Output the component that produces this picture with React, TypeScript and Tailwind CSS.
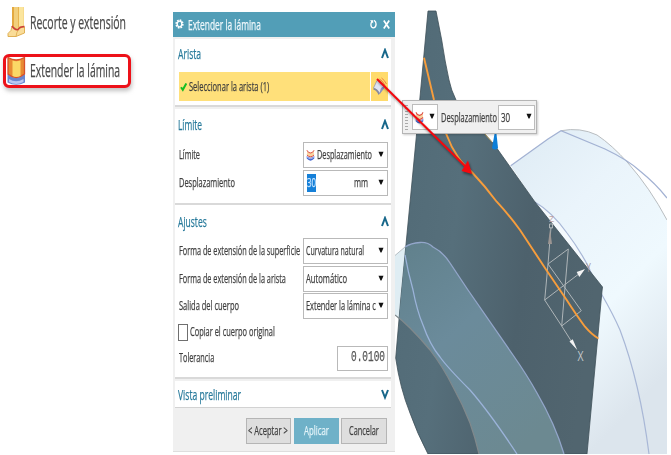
import { useLayoutEffect, useRef, useState } from "react";
import type { ReactNode } from "react";

/** Text on a single line, condensed or stretched to a given width. */
function Fit({ w, className = "", children }: { w: number; className?: string; children: string }) {
  const ref = useRef<HTMLSpanElement>(null);
  const [scale, setScale] = useState(1);
  useLayoutEffect(() => {
    const natural = ref.current?.offsetWidth ?? 0;
    if (natural) setScale(w / natural);
  }, [w, children]);
  return (
    <span className="block shrink-0 whitespace-nowrap" style={{ width: w }}>
      <span
        ref={ref}
        className={`block w-max origin-left ${className}`}
        style={{ transform: `scaleX(${scale})` }}
      >
        {children}
      </span>
    </span>
  );
}

const label = "text-[12.5px] leading-[18px] text-[#3f3f3f]";

function Triangle() {
  return (
    <svg className="relative -top-px shrink-0" width="6" height="6" viewBox="0 0 6 6">
      <path d="M0.5 0.8H5.5L3.5 5.4H2.5Z" fill="#111" />
    </svg>
  );
}

function Chevron({ down = false }: { down?: boolean }) {
  return (
    <svg width="8" height="11" viewBox="0 0 8 11" className="relative -top-px shrink-0">
      <path d={down ? "M1 1L4 8.5L7 1" : "M1 10L4 2L7 10"} fill="none" stroke="#17678a" strokeWidth="2" />
    </svg>
  );
}

function SheetIcon({ className }: { className: string }) {
  return (
    <svg className={className} viewBox="0 0 10 12" preserveAspectRatio="none">
      <path d="M.8 7Q5 10.500 9.200 7V9.500Q5 13.800 .8 9.500Z" fill="#4566d0" />
      <path d="M1.200 1.500L3 3.600H7L8.800 1.500V6.200Q5 9.600 1.200 6.200Z" fill="#f9d3a0" />
      <path d="M1 1.200Q2.500 4 5 4Q7.500 4 9 1.200M1 6Q5 9.600 9 6" fill="none" stroke="#dc4a40" strokeWidth="1" />
      <path d="M1.200 8Q5 11.200 8.800 8" fill="none" stroke="#e6ebfb" strokeWidth=".7" />
    </svg>
  );
}

function Header({ title, w, down = false }: { title: string; w: number; down?: boolean }) {
  return (
    <div className="flex h-[28px] items-center justify-between pr-[2px] pl-[3px]">
      <Fit w={w} className="relative -top-px text-[15px] leading-[20px] text-[#26799a]">{title}</Fit>
      <Chevron down={down} />
    </div>
  );
}

function Select({ children }: { children: ReactNode }) {
  return (
    <div className="flex h-[26px] w-[85px] shrink-0 items-center justify-between border border-[#b9b9b9] bg-white pr-[3px] pl-[2px]">
      <div className="flex items-center">{children}</div>
      <Triangle />
    </div>
  );
}

function Row({ text, w, children }: { text: string; w: number; children: ReactNode }) {
  return (
    <div className="flex h-[26px] items-center justify-between pr-[3px] pl-[4px]">
      <Fit w={w} className={label}>{text}</Fit>
      {children}
    </div>
  );
}

function Commands() {
  return (
    <aside className="w-[173px] shrink-0 pt-[6px]">
      <div className="flex h-[32px] items-center gap-[4px] pl-[7px]">
        <svg width="19" height="32" viewBox="7 6 19 32">
          <path d="M12 7H24V28L13 30L12 26Z" fill="#f2cf7c" />
          <path d="M13 7V26" stroke="#e2a53a" strokeWidth="1.8" fill="none" />
          <path d="M18.500 7V27" stroke="#e8b450" strokeWidth="1" fill="none" />
          <path d="M19 7H23.500V26H19Z" fill="#fbe59d" />
          <path d="M12 26Q12 31 8 33.500V36.500H16L24.500 33V27Q20 27 18 30Z" fill="#f9dc98" stroke="#dda947" strokeWidth=".9" />
          <path d="M16 36.500Q16.500 32 18.500 29.500" stroke="#dda947" strokeWidth=".8" fill="none" />
          <path d="M12 26Q15 30.500 18 29.500Q20 26.500 24.500 26.500" fill="none" stroke="#cc4038" strokeWidth="1.5" />
        </svg>
        <Fit w={96} className="text-[18px] leading-[24px] text-[#4a4a4a]">Recorte y extensión</Fit>
      </div>
      <div className="mt-[16px] ml-[3px] flex h-[34px] w-[128px] items-center rounded-[6px] border-[3px] border-[#ed1119] bg-white shadow-[1px_3px_4px_#9999]">
        <svg width="19" height="28" viewBox="7 58 19 28" className="ml-[1px]">
          <path d="M7.500 75Q16 82 25 75V83.500Q16 88 7.500 83.500Z" fill="#6a86cf" />
          <path d="M9 80Q16 84.500 23.500 80V83Q16 87 9 83Z" fill="#b9c7f0" />
          <path d="M8 58.500Q16 63.500 24.500 58.500V75Q16 82 8 75Z" fill="#e88a33" stroke="#d8502c" strokeWidth="1.3" />
          <path d="M12.500 61.500Q16 63 20.500 61.500V77Q16 79 12.500 77Z" fill="#fbd866" />
        </svg>
        <Fit w={90} className="relative -top-px ml-[4px] text-[18px] leading-[24px] text-[#4a4a4a]">Extender la lámina</Fit>
      </div>
    </aside>
  );
}

function Dialog() {
  return (
    <section className="mt-[12px] flex h-[440px] w-[222px] shrink-0 flex-col border-b border-[#dedede] bg-[#f0f0f0]">
      <div className="flex h-[24.5px] shrink-0 items-center bg-[#529eb7] pl-[2px]">
        <svg width="9" height="10" viewBox="0 0 9 10">
          <ellipse cx="4.5" cy="5" rx="3.3" ry="3.9" fill="none" stroke="#fff" strokeWidth="1.6" strokeDasharray="1.7 1.1" />
          <ellipse cx="4.5" cy="5" rx="2.3" ry="2.8" fill="none" stroke="#fff" strokeWidth="1.3" />
        </svg>
        <Fit w={73} className="relative top-px ml-[4px] text-[14.5px] leading-[20px] text-[#f0f8fb]">Extender la lámina</Fit>
        <svg className="ml-auto" width="7" height="10" viewBox="0 0 7 10">
          <path d="M4 1.300Q6.500 3 6 6Q5.400 8.800 3.400 8.800Q1.200 8.800 .9 6Q.8 4 2 2.200" fill="none" stroke="#fff" strokeWidth="1.300" />
          <path d="M0 1.200H3.200V4.600Z" fill="#fff" />
        </svg>
        <svg className="mr-[5px] ml-[6px]" width="7" height="9" viewBox="0 0 7 9">
          <path d="M.8 .5L6.2 8.5M6.2 .5L.8 8.5" stroke="#fff" strokeWidth="1.7" />
        </svg>
      </div>

      <div className="mt-[2.5px] flex h-[412px] w-[216px] flex-col self-start ml-[2px]">
        <div className="h-[68px] shrink-0 border-b-2 border-[#d9d9d9] bg-white pt-px">
          <Header title="Arista" w={23} />
          <div className="mt-[4px] mr-[3px] ml-[4px] flex h-[29px] gap-px">
            <div className="flex flex-1 items-center bg-[#ffe07a]">
              <svg className="ml-[1px] mr-[2px]" width="7" height="10" viewBox="0 0 7 10">
                <path d="M1 5.2L2.8 7.8L6.3 1.4" fill="none" stroke="#16bd23" strokeWidth="2" />
              </svg>
              <Fit w={80} className={label}>Seleccionar la arista (1)</Fit>
            </div>
            <div className="flex w-[17px] items-center justify-center bg-[#ffdb6c]">
              <svg width="15" height="20" viewBox="0 0 15 20">
                <path d="M5 3.500Q9 4 12 9L7.500 16.500Q6 12 1.500 11Z" fill="#dfe3f3" stroke="#8d91a4" strokeWidth=".7" />
                <path d="M1.500 11Q6 12 7.500 16.500L6.500 18Q5 13.500 1.500 12.800Z" fill="#8588a1" />
                <path d="M9 11L12 9V11.500L7.500 17.500V16Z" fill="#8f93bd" />
                <path d="M7.500 2Q11 4 13 8.500M9.500 1Q12.500 3 14.500 7" stroke="#ee753a" strokeWidth=".9" fill="none" />
              </svg>
            </div>
          </div>
        </div>

        <div className="mt-[2px] h-[96px] shrink-0 border-b-2 border-[#d9d9d9] bg-white pt-[2px]">
          <Header title="Límite" w={24} />
          <div className="mt-[3px] flex flex-col gap-[2px]">
            <Row text="Límite" w={21}>
              <Select>
                <SheetIcon className="mr-[2px] h-[12px] w-[9px]" />
                <Fit w={55} className={label}>Desplazamiento</Fit>
              </Select>
            </Row>
            <Row text="Desplazamiento" w={56}>
              <Select>
                <span className="ml-px flex h-[18px] w-[9px] items-center bg-[#1680d8]">
                  <Fit w={9} className="text-[12.5px] leading-[18px] text-[#c7e4ff]">30</Fit>
                </span>
                <span className="ml-[38px]">
                  <Fit w={14} className={label}>mm</Fit>
                </span>
              </Select>
            </Row>
          </div>
        </div>

        <div className="h-[174px] shrink-0 border-b-2 border-[#d9d9d9] bg-white pt-[3px]">
          <Header title="Ajustes" w={29} />
          <div className="mt-[2px] flex flex-col gap-[1.7px]">
            <Row text="Forma de extensión de la superficie" w={121}>
              <Select><Fit w={58} className={label}>Curvatura natural</Fit></Select>
            </Row>
            <Row text="Forma de extensión de la arista" w={107}>
              <Select><Fit w={41} className={label}>Automático</Fit></Select>
            </Row>
            <Row text="Salida del cuerpo" w={60}>
              <Select><Fit w={70} className={label}>Extender la lámina c</Fit></Select>
            </Row>
          </div>
          <div className="mt-[3px] flex h-[20px] items-center pl-[3px]">
            <span className="mr-[2px] h-[17px] w-[10px] border border-[#6f6f6f] bg-white" />
            <Fit w={85} className={label}>Copiar el cuerpo original</Fit>
          </div>
          <div className="mt-[3px]">
            <Row text="Tolerancia" w={35}>
              <div className="flex h-[25px] w-[51px] items-center justify-end border border-[#b9b9b9] bg-white pr-[2px]">
                <Fit w={34} className="font-['Liberation_Mono'] text-[15px] leading-[18px] text-[#555]">0.0100</Fit>
              </div>
            </Row>
          </div>
        </div>

        <div className="mt-[2px] h-[27px] shrink-0 border-b border-[#d2d2d2] bg-white">
          <Header title="Vista preliminar" w={63} down />
        </div>

        <div className="mt-[10px] flex justify-end gap-[2.5px] pr-[4px]">
          <div className="flex h-[26px] w-[45.5px] items-center justify-center border border-[#b5b5b5] bg-[#dedede]">
            <Fit w={40} className={label}>{"< Aceptar >"}</Fit>
          </div>
          <div className="flex h-[26px] w-[45px] items-center justify-center bg-[#6fb1c8]">
            <Fit w={25} className="text-[12.5px] leading-[18px] text-[#e3f3f8]">Aplicar</Fit>
          </div>
          <div className="flex h-[26px] w-[46px] items-center justify-center border border-[#b5b5b5] bg-[#dedede]">
            <Fit w={30} className={label}>Cancelar</Fit>
          </div>
        </div>
      </div>
    </section>
  );
}

const plate =
  "M428 11H436L441.7 40Q445 62 449 80Q451 90 456 100Q466 119 484 133L492 142L496.7 148L535 202L602.5 287L602 291L587 454H428Q417 433 410 413Q400 388 395.7 358L400.7 300L416 140Z";
const tube =
  "M395 255.5L405 247Q411 243 420 242.5Q428 242 433 247Q443 252 450 263L468 290L513 355Q527 375 537 393Q555 424 564 454H479Q475 437 470 423Q463 405 453 387Q443 367 430 350Q420 338 410 328Q402 320 395 315Z";

function Scene() {
  return (
    <svg className="shrink-0" width="272" height="454" viewBox="395 0 272 454">
      <defs>
        <linearGradient id="plateFill" gradientUnits="userSpaceOnUse" x1="395" y1="200" x2="605" y2="230">
          <stop offset="0" stopColor="#526b77" />
          <stop offset="0.3" stopColor="#566f7b" />
          <stop offset="0.65" stopColor="#4d616c" />
          <stop offset="1" stopColor="#51656f" />
        </linearGradient>
        <linearGradient id="bodyFill" x1="0" y1="0" x2="0.5" y2="1">
          <stop offset="0" stopColor="#deebf4" />
          <stop offset="0.35" stopColor="#eaf4fb" />
          <stop offset="0.68" stopColor="#eff9fe" />
          <stop offset="1" stopColor="#dce5ed" />
        </linearGradient>
        <linearGradient id="tubeFill" x1="0" y1="0" x2="0.7" y2="1">
          <stop offset="0" stopColor="#60808b" />
          <stop offset="0.45" stopColor="#6b8b9b" />
          <stop offset="1" stopColor="#6c8991" />
        </linearGradient>
        <clipPath id="plateClip">
          <path d={plate} />
        </clipPath>
      </defs>

      <path d="M510.7 165.7L548 139L561 130.7Q580 127 597 135Q612 145 628 163Q650 188 667 220V454H587L602 287L535 202Z" fill="url(#bodyFill)" />
      <path d="M535 202Q552 212 567 233L589 268L584 265Z" fill="#f4f9fd" />
      <path d="M561 130.7Q580 127 597 135Q612 145 628 163Q650 188 667 220" fill="none" stroke="#b9bdc0" />
      <path d="M510.7 165.7L548 139L561 130.7L605 149Q628 160 640 171Q656 184 667 198" fill="none" stroke="#a3b2d3" strokeWidth="1.3" />
      <path d="M535 202Q552 212 567 233Q580 250 589 268Q594 281 602 295Q613 314 620 330Q640 383 649 454" fill="none" stroke="#a8b7d6" strokeWidth="1.2" />

      <path d="M395 255.5L407 246V330L395 315Z" fill="#dfedf3" />
      <path d={plate} fill="url(#plateFill)" stroke="#3d4f58" strokeWidth="0.8" />
      <g clipPath="url(#plateClip)">
        <path d={tube} fill="url(#tubeFill)" />
      </g>
      <path d="M395 255.5L405 247" stroke="#b5bdc2" fill="none" />
      <path d="M405 247Q411 243 420 242.5Q428 242 433 247Q443 252 450 263L468 290L513 355Q527 375 537 393Q555 424 564 454" fill="none" stroke="#93a6ca" strokeWidth="1.3" />
      <path d="M405 255Q408 272 413 290Q417 311 423 325Q430 345 440 357Q447 367 470 390Q490 413 517 454" fill="none" stroke="#9bb3d9" strokeWidth="1.3" />
      <path d="M395 315Q402 320 410 328Q420 338 430 350Q443 367 453 387Q463 405 470 423Q475 437 479 454" fill="none" stroke="#81898c" strokeWidth="1.2" />
      <path d="M484 133L492 142" stroke="#c9a75a" strokeWidth="0.8" />

      <g fill="none" stroke="#aeb5b8" strokeWidth="1">
        <path d="M544.7 300L548 264L551 227M544.7 300L584 270M544.7 300L561.7 326L575 347" />
        <path d="M548 264L568.3 249L561.7 326L581.3 310.7Z" />
        <path d="M549.5 224H552.5V228H549.5Z" />
      </g>
      <path d="M550 229L548 244H552Z" fill="#9c9592" />
      <path d="M585 269L576.7 272L579.3 277Z" fill="#f3f3f3" />
      <path d="M569.5 341.5L572.7 339.3L577.3 350Z" fill="#f3f3f3" />
      <text x="549" y="222" fontSize="9" textLength="5" lengthAdjust="spacingAndGlyphs" fill="#b9a0a4" fontFamily="Liberation Sans, sans-serif">Z</text>
      <text x="586" y="272" fontSize="12" textLength="5" lengthAdjust="spacingAndGlyphs" fill="#a4939b" fontFamily="Liberation Sans, sans-serif">Y</text>
      <text x="577.5" y="361" fontSize="14" textLength="6" lengthAdjust="spacingAndGlyphs" fill="#c4c9cb" fontFamily="Open Sans, sans-serif">X</text>

      <path d="M424 57.7L434 100Q440 120 446.7 135Q451 147 458 157Q462 163 471.7 172Q485 186 496.7 201.7Q510 216 520 230L545 268L566.7 300Q577 316 585 326.7Q592 335 598.5 338.5" fill="none" stroke="#f79d3c" strokeWidth="1.9" />
      <path d="M494.5 134H496.5L498 148Q495 151 492 148Z" fill="#0d7fd8" />
    </svg>
  );
}

function Toolbar() {
  return (
    <div className="absolute top-[100px] left-[402px] flex h-[34px] w-[135px] items-center border border-[#b5b5b5] bg-[#f0f0f0] pl-[2px] shadow-[1px_1px_2px_#0003]">
      <div className="mr-[4px] h-[27px] w-[3px] bg-[radial-gradient(#aaa_0.6px,transparent_0.8px)] bg-[size:2px_3px]" />
      <div className="flex h-[26px] w-[26px] items-center justify-between border border-[#bcbcbc] bg-white pr-[2px] pl-[2px]">
        <SheetIcon className="h-[13px] w-[9px]" />
        <Triangle />
      </div>
      <span className="relative top-px ml-[3px]"><Fit w={56} className={label}>Desplazamiento</Fit></span>
      <div className="ml-px flex h-[25px] w-[37px] items-center justify-between border border-[#bcbcbc] bg-white pr-[2px] pl-[2px]">
        <span className="relative top-px"><Fit w={9} className={label}>30</Fit></span>
        <Triangle />
      </div>
    </div>
  );
}

export default function App() {
  return (
    <main className="relative flex h-[455px] w-[671px] items-start overflow-hidden bg-white font-['Open_Sans','Noto_Sans',sans-serif] [-webkit-text-stroke:0.25px]">
      <Commands />
      <Dialog />
      <Scene />
      <Toolbar />
      <svg className="pointer-events-none absolute top-0 left-0" width="671" height="455">
        <g className="drop-shadow-[1px_2px_1px_#0006]">
          <path d="M377 79L467 168" stroke="#f4080e" strokeWidth="2" />
          <path d="M472 174L461.5 171L468 160.5Z" fill="#f4080e" />
        </g>
      </svg>
    </main>
  );
}
